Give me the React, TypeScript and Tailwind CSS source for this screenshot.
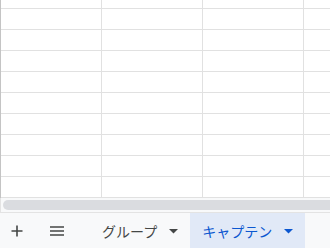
import React from "react";

const Caret = ({ color }: { color: string }) => (
  <svg width="9" height="5" viewBox="0 0 9 5" className="ml-[12px]">
    <path d="M0 0 L9 0 L4.5 4.5 Z" fill={color} />
  </svg>
);

export default function App() {
  const rows = Array.from({ length: 9 });
  const Row = ({ h }: { h: string }) => (
    <div className={`flex border-b border-[#e1e1e1] ${h}`}>
      <div className="w-[101px] shrink-0 border-r border-[#e1e1e1]" />
      <div className="w-[101px] shrink-0 border-r border-[#e1e1e1]" />
      <div className="w-[101px] shrink-0 border-r border-[#e1e1e1]" />
      <div className="flex-1" />
    </div>
  );
  return (
    <div
      className="w-[330px] h-[248px] overflow-hidden bg-white flex flex-col"
      style={{ fontFamily: '"Noto Sans CJK JP", "Noto Sans", sans-serif' }}
    >
      <div className="border-l border-[#c4c4c4]">
        <Row h="h-[9px]" />
        {rows.map((_, i) => (
          <Row key={i} h="h-[21px]" />
        ))}
      </div>
      <div className="h-[15px] bg-[#f8f9fa] border-l border-[#c4c4c4] flex items-center pl-[2px] border-b border-[#e3e3e3]">
        <div className="h-[10px] flex-1 bg-[#dadce0] rounded-l-full" />
      </div>
      <div className="flex-1 bg-[#f8f9fa] flex items-stretch">
        <div className="w-[33px] flex items-center justify-center pt-[1px]">
          <svg width="12" height="12" viewBox="0 0 12 12">
            <path d="M6 0.5 V11.5 M0.5 6 H11.5" stroke="#444746" strokeWidth="1.6" />
          </svg>
        </div>
        <div className="w-[48px] flex items-center justify-center pt-[1px]">
          <svg width="14" height="10" viewBox="0 0 14 10">
            <path d="M0 1 H14 M0 5 H14 M0 9 H14" stroke="#444746" strokeWidth="1.6" />
          </svg>
        </div>
        <div className="flex items-center pl-[21px] pr-[12px] pt-[2px] text-[14px] text-[#444746]">
          <span>グループ</span>
          <Caret color="#444746" />
        </div>
        <div className="flex items-center w-[115px] pl-[12px] pt-[2px] bg-[#e1e9f7] text-[14px] text-[#0b57d0]">
          <span>キャプテン</span>
          <Caret color="#0b57d0" />
        </div>
      </div>
    </div>
  );
}
